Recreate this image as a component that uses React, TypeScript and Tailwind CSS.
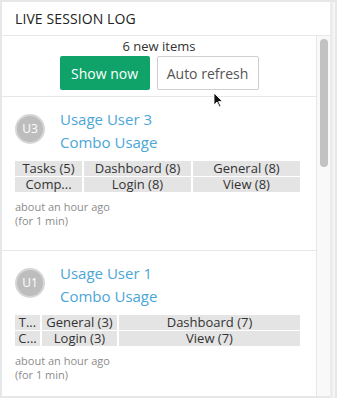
import React from 'react';

interface SessionItem {
  initials: string;
  name: string;
  group: string;
  cols: string;
  rows: string[][];
  time: string;
  duration: string;
}

const items: SessionItem[] = [
  {
    initials: 'U3',
    name: 'Usage User 3',
    group: 'Combo Usage',
    cols: 'grid-cols-[67px_107px_107px]',
    rows: [
      ['Tasks (5)', 'Dashboard (8)', 'General (8)'],
      ['Comp...', 'Login (8)', 'View (8)'],
    ],
    time: 'about an hour ago',
    duration: '(for 1 min)',
  },
  {
    initials: 'U1',
    name: 'Usage User 1',
    group: 'Combo Usage',
    cols: 'grid-cols-[25px_75px_181px]',
    rows: [
      ['T...', 'General (3)', 'Dashboard (7)'],
      ['C...', 'Login (3)', 'View (7)'],
    ],
    time: 'about an hour ago',
    duration: '(for 1 min)',
  },
];

function SessionRow({ item }: { item: SessionItem }) {
  return (
    <div className="border-t border-[#e6e7e9] pl-[13px] pr-[15px] pt-[11px] pb-[22px]">
      <div className="flex items-start">
        <div className="mt-[6px] w-[30px] h-[30px] rounded-full bg-[#bdbdbd] border-2 border-[#d6d6d6] flex items-center justify-center text-white text-[12px]">
          {item.initials}
        </div>
        <div className="ml-[15px] flex flex-col text-[#4ba6d7] text-[15px] leading-[23px]">
          <span>{item.name}</span>
          <span>{item.group}</span>
        </div>
      </div>
      <div className={`mt-[7px] grid ${item.cols} gap-x-[2px] gap-y-[1px] text-[13px] leading-[15px] text-[#333]`}>
        {item.rows.flat().map((t, i) => (
          <div key={i} className="bg-[#e4e4e4] text-center truncate h-[15px] px-[1px]">
            {t}
          </div>
        ))}
      </div>
      <div className="mt-[8px] text-[11px] leading-[14px] text-[#8c8c8c]">
        <div>{item.time}</div>
        <div>{item.duration}</div>
      </div>
    </div>
  );
}

export default function App() {
  return (
    <div
      className="w-[337px] h-[398px] bg-[#e6e7e9] flex pt-[2px] pl-[2px] overflow-hidden relative"
      style={{ fontFamily: '"Open Sans", "Noto Sans", sans-serif' }}
    >
      <div className="w-[328px] h-[394px] bg-white flex flex-col">
        <div className="h-[34px] border-b border-[#e6e7e9] flex items-center px-[13px] text-[14px] font-medium text-[#222] tracking-[0.1px]">
          LIVE SESSION LOG
        </div>
        <div className="flex-1 flex min-h-0">
          <div className="flex-1 overflow-hidden">
            <div className="flex flex-col items-center pt-[1px] pb-[6px]">
              <div className="text-[13px] leading-[18px] text-[#333]">6 new items</div>
              <div className="flex gap-[7px] mt-[1px]">
                <button className="w-[90px] h-[34px] rounded-[2px] bg-[#0fa36a] text-white text-[14px]">
                  Show now
                </button>
                <button className="w-[102px] h-[34px] rounded-[2px] bg-white border border-[#cfcfcf] text-[#555] text-[14px]">
                  Auto refresh
                </button>
              </div>
            </div>
            {items.map((it) => (
              <SessionRow key={it.initials} item={it} />
            ))}
          </div>
          <div className="w-[14px] border-l border-[#e6e7e9] bg-[#f9f9f9] pt-[3px] flex justify-center">
            <div className="w-[8px] h-[128px] rounded-full bg-[#c2c2c2]" />
          </div>
        </div>
      </div>
      <div className="w-[3px] h-full bg-[#ececec]" />
      <div className="w-[2px] h-full bg-[#f6f6f6]" />
      <svg
        className="absolute left-[213px] top-[92px]"
        width="11"
        height="16"
        viewBox="0 0 11 16"
      >
        <path d="M1 1 L1 13 L4 10 L6.5 15 L8 14.3 L5.6 9.5 L9.5 9.5 Z" fill="#111" stroke="#fff" strokeWidth="0.8" />
      </svg>
    </div>
  );
}
